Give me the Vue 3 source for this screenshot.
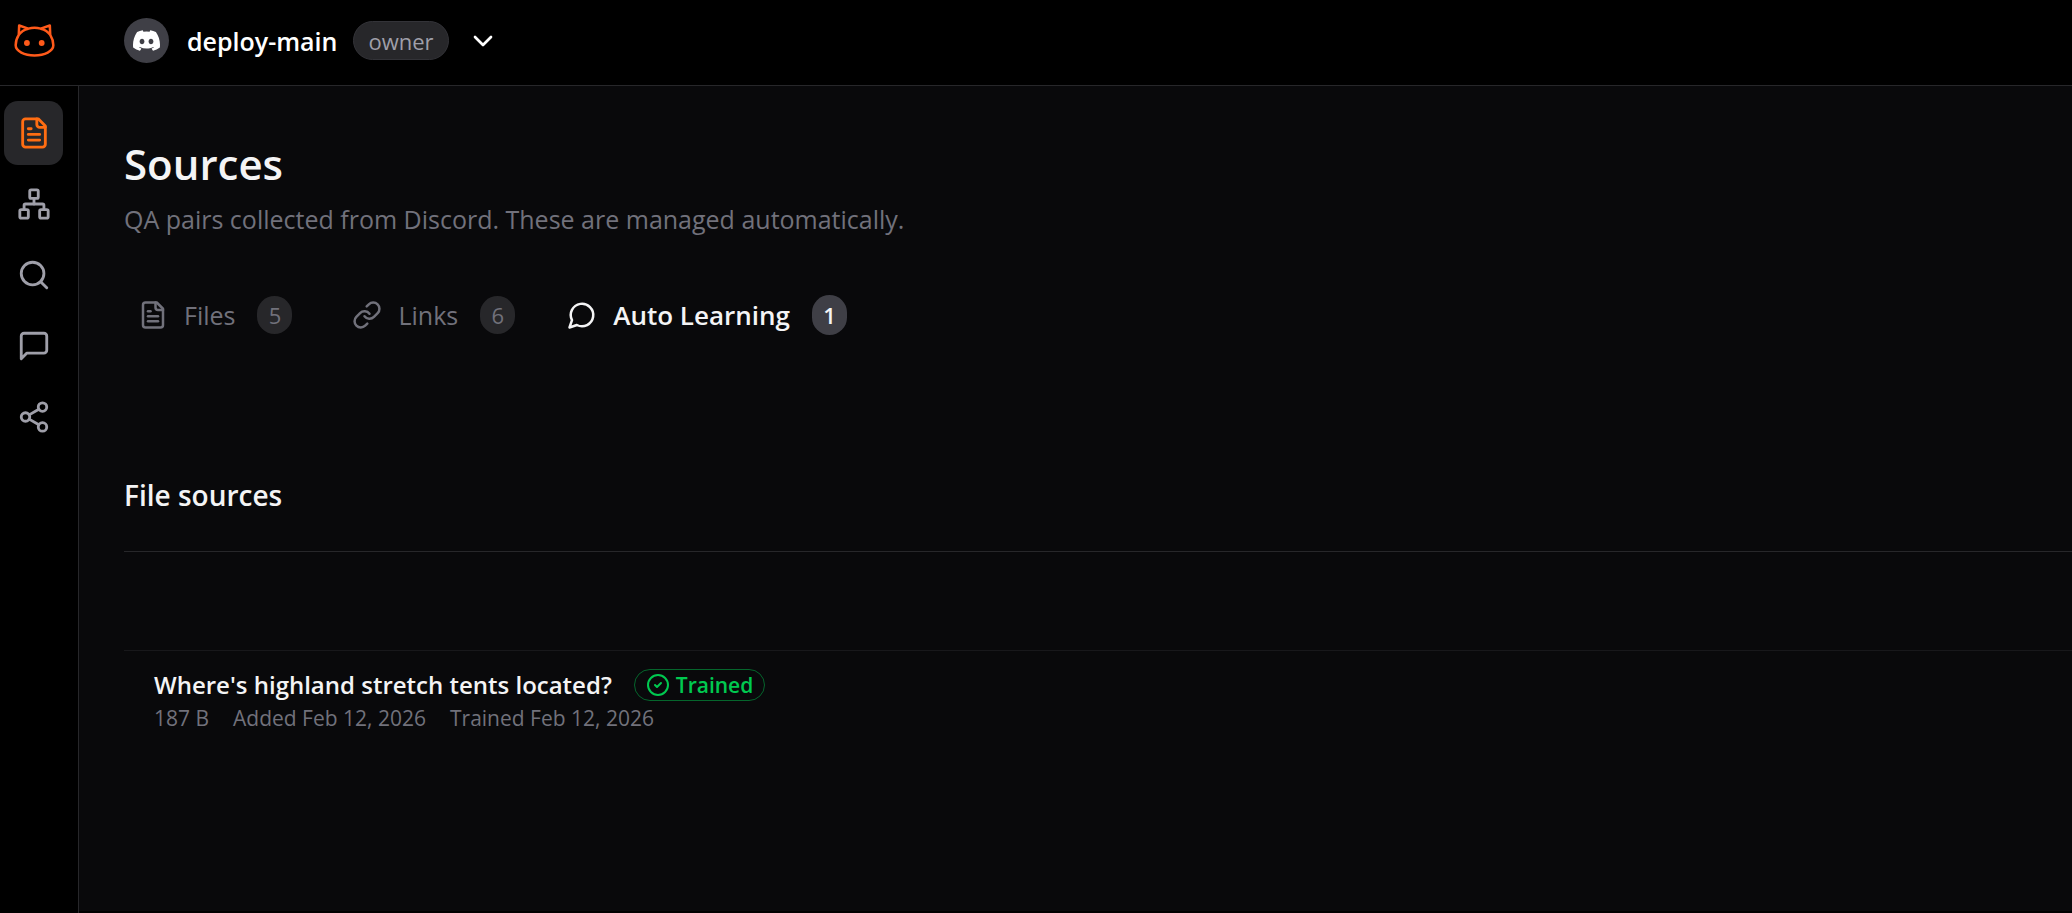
<script setup>
import { ref } from 'vue'

const navItems = [
	{
		id: 'sources',
		label: 'Sources',
		paths: [
			'M15 2H6a2 2 0 0 0-2 2v16a2 2 0 0 0 2 2h12a2 2 0 0 0 2-2V7Z',
			'M14 2v4a2 2 0 0 0 2 2h4',
			'M10 9H8',
			'M16 13H8',
			'M16 17H8',
		],
	},
	{
		id: 'integrations',
		label: 'Integrations',
		paths: [
			'M17 16h4a1 1 0 0 1 1 1v4a1 1 0 0 1-1 1h-4a1 1 0 0 1-1-1v-4a1 1 0 0 1 1-1Z',
			'M3 16h4a1 1 0 0 1 1 1v4a1 1 0 0 1-1 1H3a1 1 0 0 1-1-1v-4a1 1 0 0 1 1-1Z',
			'M10 2h4a1 1 0 0 1 1 1v4a1 1 0 0 1-1 1h-4a1 1 0 0 1-1-1V3a1 1 0 0 1 1-1Z',
			'M5 16v-3a1 1 0 0 1 1-1h12a1 1 0 0 1 1 1v3',
			'M12 12V8',
		],
	},
	{
		id: 'search',
		label: 'Search',
		paths: ['M19 11a8 8 0 1 1-16 0a8 8 0 0 1 16 0Z', 'm21 21-4.3-4.3'],
	},
	{
		id: 'chat',
		label: 'Chat',
		paths: ['M21 15a2 2 0 0 1-2 2H7l-4 4V5a2 2 0 0 1 2-2h14a2 2 0 0 1 2 2z'],
	},
	{
		id: 'share',
		label: 'Share',
		paths: [
			'M21 5a3 3 0 1 1-6 0a3 3 0 0 1 6 0Z',
			'M9 12a3 3 0 1 1-6 0a3 3 0 0 1 6 0Z',
			'M21 19a3 3 0 1 1-6 0a3 3 0 0 1 6 0Z',
			'm8.59 13.51 6.83 3.98',
			'm15.41 6.51-6.82 3.98',
		],
	},
]

const tabs = [
	{ id: 'files', label: 'Files', count: 5, paths: navItems[0].paths },
	{
		id: 'links',
		label: 'Links',
		count: 6,
		paths: [
			'M10 13a5 5 0 0 0 7.54.54l3-3a5 5 0 0 0-7.07-7.07l-1.72 1.71',
			'M14 11a5 5 0 0 0-7.54-.54l-3 3a5 5 0 0 0 7.07 7.07l1.71-1.71',
		],
	},
	{ id: 'auto', label: 'Auto Learning', count: 1, paths: ['M7.9 20A9 9 0 1 0 4 16.1L2 22Z'] },
]

const sources = [
	{
		id: 1,
		title: "Where's highland stretch tents located?",
		status: 'Trained',
		meta: ['187 B', 'Added Feb 12, 2026', 'Trained Feb 12, 2026'],
	},
]

const activeNav = ref('sources')
const activeTab = ref('auto')
</script>

<template>
	<div class="app">
		<header class="topbar">
			<a class="logo" href="#" aria-label="Home">
				<svg viewBox="0 0 42 34" fill="none" stroke="currentColor" stroke-width="2.6" stroke-linejoin="round">
					<path d="M4.8 11.2 5.2 1.6 14.6 4.8C18.4 3.6 23.6 3.6 27.4 4.8L36.8 1.6 37.2 11.2C39 14 40.4 18.4 40.4 22C40.4 28 31.4 32.4 21 32.4S1.6 28 1.6 22C1.6 18.4 3 14 4.8 11.2Z" />
					<path d="M4.8 11.2C7 8 10.4 5.8 14.6 4.8M37.2 11.2C35 8 31.6 5.8 27.4 4.8" />
					<circle cx="13.2" cy="19.6" r="3" fill="currentColor" stroke="none" />
					<circle cx="28.4" cy="19.6" r="3" fill="currentColor" stroke="none" />
				</svg>
			</a>
			<button class="workspace" type="button">
				<span class="avatar">
					<svg viewBox="0 0 24 24" fill="currentColor">
						<path d="M20.317 4.37a19.79 19.79 0 0 0-4.885-1.515.074.074 0 0 0-.079.037c-.21.375-.444.864-.608 1.25a18.27 18.27 0 0 0-5.487 0 12.64 12.64 0 0 0-.617-1.25.077.077 0 0 0-.079-.037A19.74 19.74 0 0 0 3.677 4.37a.07.07 0 0 0-.032.027C.533 9.046-.32 13.58.099 18.057a.082.082 0 0 0 .031.057 19.9 19.9 0 0 0 5.993 3.03.078.078 0 0 0 .084-.028c.462-.63.874-1.295 1.226-1.994a.076.076 0 0 0-.041-.106 13.1 13.1 0 0 1-1.872-.892.077.077 0 0 1-.008-.128c.126-.094.252-.192.372-.292a.074.074 0 0 1 .077-.01c3.928 1.793 8.18 1.793 12.062 0a.074.074 0 0 1 .078.01c.12.098.246.198.373.292a.077.077 0 0 1-.006.127 12.3 12.3 0 0 1-1.873.892.077.077 0 0 0-.041.107c.36.698.772 1.362 1.225 1.993a.076.076 0 0 0 .084.028 19.84 19.84 0 0 0 6.002-3.03.077.077 0 0 0 .032-.054c.5-5.177-.838-9.674-3.549-13.66a.061.061 0 0 0-.031-.03zM8.02 15.33c-1.183 0-2.157-1.085-2.157-2.419 0-1.333.956-2.419 2.157-2.419 1.21 0 2.176 1.096 2.157 2.42 0 1.333-.956 2.418-2.157 2.418zm7.975 0c-1.183 0-2.157-1.085-2.157-2.419 0-1.333.955-2.419 2.157-2.419 1.21 0 2.176 1.096 2.157 2.42 0 1.333-.946 2.418-2.157 2.418z" />
					</svg>
				</span>
				<span class="workspace-name">deploy-main</span>
				<span class="role">owner</span>
				<svg class="icon chevron" viewBox="0 0 24 24"><path d="m6 9 6 6 6-6" /></svg>
			</button>
		</header>

		<div class="body">
			<nav class="sidebar">
				<a
					v-for="item in navItems"
					:key="item.id"
					class="nav-item"
					:class="{ active: activeNav === item.id }"
					:href="'#' + item.id"
					:aria-label="item.label"
					@click="activeNav = item.id"
				>
					<svg class="icon" viewBox="0 0 24 24"><path v-for="d in item.paths" :key="d" :d="d" /></svg>
				</a>
			</nav>

			<main class="content">
				<h1>Sources</h1>
				<p class="subtitle">QA pairs collected from Discord. These are managed automatically.</p>

				<div class="tabs" role="tablist">
					<button
						v-for="tab in tabs"
						:key="tab.id"
						class="tab"
						:class="{ active: activeTab === tab.id }"
						type="button"
						role="tab"
						:aria-selected="activeTab === tab.id"
						@click="activeTab = tab.id"
					>
						<svg class="icon" viewBox="0 0 24 24"><path v-for="d in tab.paths" :key="d" :d="d" /></svg>
						<span class="tab-label">{{ tab.label }}</span>
						<span class="count">{{ tab.count }}</span>
					</button>
				</div>

				<section>
					<h2>File sources</h2>
					<ul class="source-list">
						<li v-for="source in sources" :key="source.id" class="source">
							<div class="source-head">
								<h3>{{ source.title }}</h3>
								<span class="status">
									<svg class="icon" viewBox="0 0 24 24">
										<circle cx="12" cy="12" r="10" />
										<path d="m9 12 2 2 4-4" />
									</svg>
									{{ source.status }}
								</span>
							</div>
							<div class="source-meta">
								<span v-for="text in source.meta" :key="text">{{ text }}</span>
							</div>
						</li>
					</ul>
				</section>
			</main>
		</div>
	</div>
</template>

<style>
body {
	margin: 0;
	background: #000;
}
</style>

<style scoped>
.app {
	display: flex;
	flex-direction: column;
	min-height: 100vh;
	background: #000;
	color: #f4f4f5;
	font-family: 'Segoe UI', 'Open Sans', 'Noto Sans', sans-serif;
}

button {
	border: 0;
	padding: 0;
	background: none;
	color: inherit;
	font: inherit;
	cursor: pointer;
}

h1,
h2,
h3,
p,
ul {
	margin: 0;
	padding: 0;
	font-weight: 600;
}

.icon {
	flex: none;
	fill: none;
	stroke: currentColor;
	stroke-width: 2;
	stroke-linecap: round;
	stroke-linejoin: round;
}

.topbar {
	display: flex;
	align-items: center;
	gap: 68px;
	height: 81px;
	padding: 0 14px 4px;
	border-bottom: 1px solid #27272a;
}

.logo {
	color: #ff5a1a;
}

.logo svg {
	display: block;
	width: 41px;
	height: 33px;
	margin-right: 1px;
}

.workspace {
	display: flex;
	align-items: center;
}

.avatar {
	display: grid;
	place-items: center;
	width: 45px;
	height: 45px;
	margin-right: 18px;
	border-radius: 50%;
	background: #3f3f46;
	color: #fff;
}

.avatar svg {
	width: 27px;
	height: 27px;
}

.workspace-name {
	margin-right: 16px;
	color: #fff;
	font-size: 25px;
	font-weight: 600;
}

.role {
	box-sizing: border-box;
	height: 39px;
	margin-right: 18px;
	padding: 0 14px;
	border: 1px solid #333338;
	border-radius: 20px;
	background: #27272a;
	color: #9f9fa9;
	font-size: 22px;
	font-weight: 500;
	line-height: 38px;
}

.chevron {
	width: 32px;
	height: 32px;
	color: #fff;
}

.body {
	display: flex;
	flex: 1;
}

.sidebar {
	display: flex;
	flex-direction: column;
	gap: 7px;
	padding: 15px 15px 0 4px;
	border-right: 1px solid #27272a;
}

.nav-item {
	display: grid;
	place-items: center;
	width: 59px;
	height: 64px;
	border-radius: 14px;
	color: #9f9fa9;
}

.nav-item .icon {
	width: 34px;
	height: 34px;
}

.nav-item.active {
	background: #27272a;
	color: #ff6d12;
}

.content {
	flex: 1;
	min-width: 0;
	margin-bottom: 2px;
	padding: 48px 0 0 45px;
	background: #09090b;
}

h1 {
	font-size: 42px;
	line-height: 60px;
}

.subtitle {
	margin-top: 5px;
	color: #71717b;
	font-size: 25px;
	font-weight: 400;
	line-height: 40px;
}

.tabs {
	display: flex;
	align-items: center;
	gap: 32px;
	height: 60px;
	margin-top: 46px;
}

.tab {
	display: flex;
	align-items: center;
	padding: 0 14px;
	color: #71717b;
	font-size: 25px;
	font-weight: 500;
}

.tab .icon {
	width: 30px;
	height: 30px;
	margin-right: 16px;
}

.count {
	min-width: 35px;
	margin-left: 22px;
	border-radius: 20px;
	background: #27272a;
	font-size: 22px;
	line-height: 38px;
	text-align: center;
}

.tab.active {
	padding: 0 6px;
	color: #f4f4f5;
	font-size: 26px;
	font-weight: 600;
}

.tab.active .count {
	background: #3f3f46;
	line-height: 40px;
}

h2 {
	margin-top: 130px;
	font-size: 28px;
	line-height: 40px;
}

.source-list {
	margin-top: 36px;
	padding-top: 98px;
	border-top: 1px solid #27272a;
	list-style: none;
}

.source {
	padding: 17px 30px;
	border-top: 1px solid #18181b;
}

.source-head {
	display: flex;
	align-items: center;
	gap: 22px;
}

h3 {
	font-size: 24px;
	line-height: 34px;
}

.status {
	display: flex;
	align-items: center;
	gap: 6px;
	box-sizing: border-box;
	height: 32px;
	padding: 0 11px;
	border: 1px solid #05652c;
	border-radius: 16px;
	color: #00c950;
	font-size: 21px;
	font-weight: 600;
}

.status .icon {
	width: 24px;
	height: 24px;
}

.source-meta {
	display: flex;
	gap: 24px;
	color: #71717b;
	font-size: 21px;
	font-weight: 400;
	line-height: 32px;
}
</style>
